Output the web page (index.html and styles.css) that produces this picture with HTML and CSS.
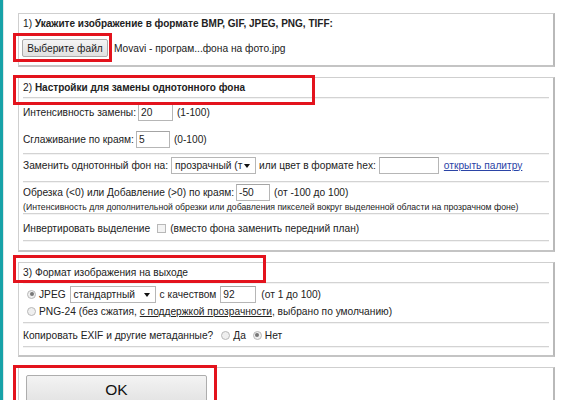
FILE: index.html
```html
<!DOCTYPE html>
<html lang="ru">
<head>
<meta charset="utf-8">
<title>Замена фона</title>
<link rel="stylesheet" href="styles.css">
</head>
<body>
<div class="page">
  <section class="box box-1">
    <div class="title">1) <b>Укажите изображение в формате BMP, GIF, JPEG, PNG, TIFF:</b></div>
    <div class="file-row">
      <button class="file-btn" type="button">Выберите файл</button>
      <span class="file-name">Movavi - програм...фона на фото.jpg</span>
    </div>
  </section>

  <section class="box box-2">
    <div class="title sep">2) <b>Настройки для замены однотонного фона</b></div>
    <div class="group sep g-intensity">
      <div class="row">Интенсивность замены:<input class="num w35" value="20"><span class="hint">(1-100)</span></div>
      <div class="row">Сглаживание по краям:<input class="num w34" value="5"><span class="hint">(0-100)</span></div>
    </div>
    <div class="group sep g-replace">
      <div class="row">Заменить однотонный фон на:<span class="sel w85"><span class="sel-text">прозрачный (т</span></span><span class="after">или цвет в формате hex:</span><input class="num w60" value=""><a class="link" href="#">открыть палитру</a></div>
    </div>
    <div class="group sep g-crop">
      <div class="row">Обрезка (&lt;0) или Добавление (&gt;0) по краям:<input class="num w34" value="-50"><span class="hint">(от -100 до 100)</span></div>
      <div class="small">(Интенсивность для дополнительной обрезки или добавления пикселей вокруг выделенной области на прозрачном фоне)</div>
    </div>
    <div class="group sep g-invert">
      <div class="row">Инвертировать выделение<span class="check"></span><span class="after2">(вместо фона заменить передний план)</span></div>
    </div>
  </section>

  <section class="box box-3">
    <div class="title sep">3) Формат изображения на выходе</div>
    <div class="group sep g-format">
      <div class="row r-jpeg"><span class="radio on"></span><span class="rlabel">JPEG</span><span class="sel w86"><span class="sel-text">стандартный</span></span><span class="after">с качеством</span><input class="num w36" value="92"><span class="hint5">(от 1 до 100)</span></div>
      <div class="row r-png"><span class="radio"></span><span class="rlabel">PNG-24 (без сжатия, <u>с поддержкой прозрачности</u>, выбрано по умолчанию)</span></div>
    </div>
    <div class="group sep g-exif">
      <div class="row">Копировать EXIF и другие метаданные?<span class="radio ex1"></span><span class="rlabel">Да</span><span class="radio ex2 on"></span><span class="rlabel">Нет</span></div>
    </div>
  </section>

  <section class="box box-4">
    <button class="ok-btn" type="button">OK</button>
  </section>

  <div class="mark m1"></div>
  <div class="mark m2"></div>
  <div class="mark m3"></div>
  <div class="mark m4"></div>
</div>
</body>
</html>
```
FILE: styles.css
```css
html, body {
  margin: 0;
  padding: 0;
  background: #fff;
}
body {
  font-family: "Liberation Sans", Arial, sans-serif;
  font-size: 10.2px;
  color: #222;
  overflow: hidden;
}
b {
  font-size: 10px;
}
.page {
  position: relative;
  height: 400px;
  border-left: 3px solid #17a2a8;
  box-shadow: inset 1px 0 0 #dfe8e8;
  padding: 13px 12px 0 15px;
}
.box {
  border: 1px solid #cfcfcf;
  border-right: 2px solid #b9b9b9;
  border-bottom: 2px solid #c4c4c4;
  margin-bottom: 10px;
}
.box-1 {
  padding: 0 0 8px 0;
}
.box-1 .title {
  padding-left: 0;
}
.title {
  height: 19px;
  line-height: 19px;
  margin: 0 4px;
}
.sep {
  border-bottom: 1px solid #d3d3d3;
  box-shadow: 0 1px 0 #f3f3f3;
}
.file-row {
  display: flex;
  align-items: center;
  margin: 6px 0 0 3px;
  height: 18px;
}
.file-btn {
  font: inherit;
  color: #222;
  height: 18px;
  width: 86px;
  padding: 0;
  border: 1px solid #ababab;
  border-radius: 2px;
  background: linear-gradient(#f4f4f4, #e1e1e1);
}
.file-name {
  margin-left: 6px;
}
.box-2 {
  padding-bottom: 9px;
}
.group {
  margin: 0 4px;
}
.row {
  display: flex;
  align-items: center;
  height: 20px;
  white-space: nowrap;
}
.g-intensity {
  padding: 4px 0 4px;
}
.g-intensity .row + .row {
  margin-top: 7px;
}
.g-replace {
  padding: 1px 0 6px;
}
.g-crop {
  padding: 0 0 1px;
}
.g-invert {
  padding: 4px 0 2px;
}
.num {
  font: inherit;
  color: #222;
  box-sizing: border-box;
  height: 17px;
  margin: 0 0 0 2px;
  padding: 0 2px;
  border: 1px solid #b6b6b6;
  border-top-color: #a4a4a4;
  background: #fff;
  outline: none;
}
.w34 { width: 34px; }
.w35 { width: 35px; }
.w36 { width: 36px; }
.w60 { width: 60px; margin-left: 3px; }
.hint { margin-left: 4px; }
.hint5 { margin-left: 5px; }
.sel {
  position: relative;
  box-sizing: border-box;
  height: 17px;
  margin-left: 3px;
  border: 1px solid #b6b6b6;
  background: #fff;
  overflow: hidden;
  display: inline-flex;
  align-items: center;
}
.sel::after {
  content: "";
  position: absolute;
  right: 5px;
  top: 6px;
  border-left: 3px solid transparent;
  border-right: 3px solid transparent;
  border-top: 4px solid #111;
}
.sel-text {
  padding-left: 3px;
  display: block;
  white-space: nowrap;
}
.w85 { width: 85px; }
.w86 { width: 86px; }
.after { margin-left: 3px; }
.link {
  margin-left: 5px;
  color: #2b44a6;
  text-decoration: underline;
}
.small {
  font-size: 8.7px;
  line-height: 10px;
  height: 10px;
  white-space: nowrap;
}
.check {
  display: inline-block;
  box-sizing: border-box;
  width: 9px;
  height: 9px;
  margin: 0 4px 0 7px;
  border: 1px solid #b8b8b8;
  background: #f3f3f3;
}
.box-3 {
  padding-bottom: 8px;
}
.g-format {
  padding: 2px 0 3px;
}
.r-jpeg { height: 18px; }
.r-png { height: 16px; }
.radio {
  display: inline-block;
  box-sizing: border-box;
  width: 9px;
  height: 9px;
  border-radius: 50%;
  border: 1px solid #b8b8b8;
  background: #efefef;
  position: relative;
  flex: none;
}
.radio.on::after {
  content: "";
  position: absolute;
  left: 1.5px;
  top: 1.5px;
  width: 4px;
  height: 4px;
  border-radius: 50%;
  background: #777;
}
.g-format .radio {
  margin-left: 4px;
}
.rlabel { margin-left: 3px; }
.r-jpeg .sel { margin-left: 4px; }
.r-jpeg .after { margin-left: 4px; }
.r-jpeg .num { margin-left: 4px; }
.g-exif {
  padding: 2px 0 1px;
}
.ex1 { margin-left: 8px; }
.ex2 { margin-left: 7px; }
.box-4 {
  padding: 7px 0 0 7px;
  height: 40px;
  border-bottom: none;
}
.ok-btn {
  font-family: "Liberation Sans", Arial, sans-serif;
  font-size: 15.5px;
  color: #111;
  width: 181px;
  height: 30px;
  padding: 0;
  border: 1px solid #adadad;
  border-radius: 2px;
  background: linear-gradient(#f3f3f3, #e2e2e2);
}
.mark {
  position: absolute;
  border: 3px solid #e3131d;
  box-sizing: border-box;
}
.m1 { left: 10px; top: 33px; width: 99px; height: 29px; }
.m2 { left: 10px; top: 75px; width: 302px; height: 30px; }
.m3 { left: 10px; top: 255px; width: 253px; height: 28px; }
.m4 { left: 10px; top: 365px; width: 204px; height: 50px; }
```
